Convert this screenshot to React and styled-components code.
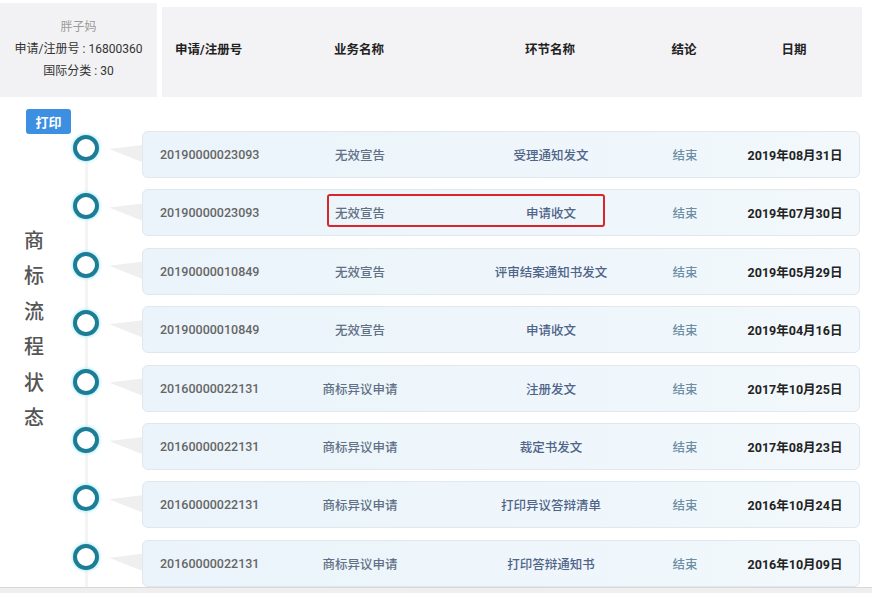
import React from "react";
import styled, { createGlobalStyle } from "styled-components";

const GlobalStyle = createGlobalStyle`
  html, body {
    margin: 0;
    padding: 0;
    background: #fff;
  }
  body {
    font-family: Roboto, "Noto Sans CJK SC", sans-serif;
  }
`;

const rows = [
  { no: "20190000023093", biz: "无效宣告", step: "受理通知发文", result: "结束", date: "2019年08月31日" },
  { no: "20190000023093", biz: "无效宣告", step: "申请收文", result: "结束", date: "2019年07月30日", marked: true },
  { no: "20190000010849", biz: "无效宣告", step: "评审结案通知书发文", result: "结束", date: "2019年05月29日" },
  { no: "20190000010849", biz: "无效宣告", step: "申请收文", result: "结束", date: "2019年04月16日" },
  { no: "20160000022131", biz: "商标异议申请", step: "注册发文", result: "结束", date: "2017年10月25日" },
  { no: "20160000022131", biz: "商标异议申请", step: "裁定书发文", result: "结束", date: "2017年08月23日" },
  { no: "20160000022131", biz: "商标异议申请", step: "打印异议答辩清单", result: "结束", date: "2016年10月24日" },
  { no: "20160000022131", biz: "商标异议申请", step: "打印答辩通知书", result: "结束", date: "2016年10月09日" },
];

const Page = styled.div`
  width: 872px;
  height: 593px;
  overflow: hidden;
  display: flex;
  flex-direction: column;
  background: #fff;
`;

const Top = styled.div`
  display: flex;
  gap: 5px;
  height: 94px;
  padding: 3px 10px 0 0;
  flex-shrink: 0;
`;

const InfoBox = styled.div`
  width: 157px;
  flex-shrink: 0;
  background: #f2f2f4;
  display: flex;
  flex-direction: column;
  align-items: center;
  justify-content: center;
  gap: 3px;
  padding-bottom: 2px;
  box-sizing: border-box;
  font-size: 12px;
  line-height: 19px;
  color: #333;
`;

const Owner = styled.div`
  color: #9a9a9a;
`;

const HeaderBar = styled.div`
  flex: 1;
  min-width: 0;
  margin-top: 4px;
  padding: 0 0 7px 13px;
  background: #f3f3f5;
  display: grid;
  grid-template-columns: 79px 210px 172px 96px 124px;
  align-items: center;
  font-size: 12.5px;
  font-weight: 700;
  color: #222;
`;

const HeadCell = styled.div`
  text-align: ${(p) => (p.left ? "left" : "center")};
  white-space: nowrap;
`;

const Body = styled.div`
  flex: 1;
  display: flex;
  min-height: 0;
`;

const Side = styled.div`
  width: 73px;
  flex-shrink: 0;
  display: flex;
  flex-direction: column;
`;

const PrintButton = styled.button`
  margin: 12px 0 0 26px;
  width: 45px;
  height: 25px;
  border: none;
  border-radius: 3px;
  background: #3d8fe2;
  color: #fff;
  font-family: inherit;
  font-size: 13px;
  font-weight: 700;
  padding: 0;
  cursor: pointer;
`;

const SideTitle = styled.div`
  margin-top: 90px;
  width: 68px;
  text-align: center;
  font-size: 20px;
  line-height: 35.4px;
  font-weight: 500;
  color: #555;
  display: flex;
  flex-direction: column;
`;

const Timeline = styled.div`
  flex: 1;
  padding: 34px 12px 0 0;
  display: flex;
  flex-direction: column;
  gap: 11.4px;
  background: linear-gradient(#f4f4f4, #f4f4f4) no-repeat 12px 40px / 3px 100%;
`;

const Row = styled.div`
  display: flex;
  height: 47px;
  flex-shrink: 0;
`;

const Marker = styled.div`
  width: 69px;
  flex-shrink: 0;
  display: flex;
  align-items: flex-start;
`;

const Ring = styled.div`
  box-sizing: border-box;
  width: 26px;
  height: 26px;
  margin-top: 4px;
  border-radius: 50%;
  border: 4px solid #1d7d96;
  background: #fff;
  box-shadow: 0 0 3px 1px #b3eef8;
  flex-shrink: 0;
`;

const Wedge = styled.div`
  flex: 1;
  align-self: stretch;
  background: #efefef;
  clip-path: polygon(10px 18px, 100% 14px, 100% 31px);
`;

const Card = styled.div`
  position: relative;
  flex: 1;
  box-sizing: border-box;
  border: 1px solid #e0e7ed;
  border-radius: 6px;
  background: linear-gradient(90deg, #eaf4fa, #f2f8fc);
  display: grid;
  grid-template-columns: 112px 210px 172px 96px 124px;
  align-items: center;
  font-size: 12.5px;
  font-weight: 500;
`;

const Cell = styled.div`
  white-space: nowrap;
  text-align: ${(p) => (p.left ? "left" : "center")};
  padding-left: ${(p) => (p.left ? "17px" : "0")};
  color: ${(p) => p.color};
  font-weight: ${(p) => (p.bold ? 700 : 500)};
`;

const Highlight = styled.div`
  position: absolute;
  left: 184px;
  top: 4px;
  width: 278px;
  height: 33px;
  box-sizing: border-box;
  border: 2px solid #d9262c;
  border-radius: 3px;
  pointer-events: none;
`;

const Footer = styled.div`
  height: 5px;
  flex-shrink: 0;
  border-top: 1px solid #d8d8d8;
  background: #efefef;
`;

export default function App() {
  return (
    <>
      <GlobalStyle />
      <Page>
        <Top>
          <InfoBox>
            <Owner>胖子妈</Owner>
            <div>申请/注册号 : 16800360</div>
            <div>国际分类 : 30</div>
          </InfoBox>
          <HeaderBar>
            <HeadCell left>申请/注册号</HeadCell>
            <HeadCell>业务名称</HeadCell>
            <HeadCell>环节名称</HeadCell>
            <HeadCell>结论</HeadCell>
            <HeadCell>日期</HeadCell>
          </HeaderBar>
        </Top>
        <Body>
          <Side>
            <PrintButton>打印</PrintButton>
            <SideTitle>
              {"商标流程状态".split("").map((c) => (
                <span key={c}>{c}</span>
              ))}
            </SideTitle>
          </Side>
          <Timeline>
            {rows.map((r, i) => (
              <Row key={i}>
                <Marker>
                  <Ring />
                  <Wedge />
                </Marker>
                <Card>
                  <Cell left color="#666">{r.no}</Cell>
                  <Cell color="#617085">{r.biz}</Cell>
                  <Cell color="#4f6488">{r.step}</Cell>
                  <Cell color="#6d8ea6">{r.result}</Cell>
                  <Cell bold color="#222">{r.date}</Cell>
                  {r.marked && <Highlight />}
                </Card>
              </Row>
            ))}
          </Timeline>
        </Body>
        <Footer />
      </Page>
    </>
  );
}
